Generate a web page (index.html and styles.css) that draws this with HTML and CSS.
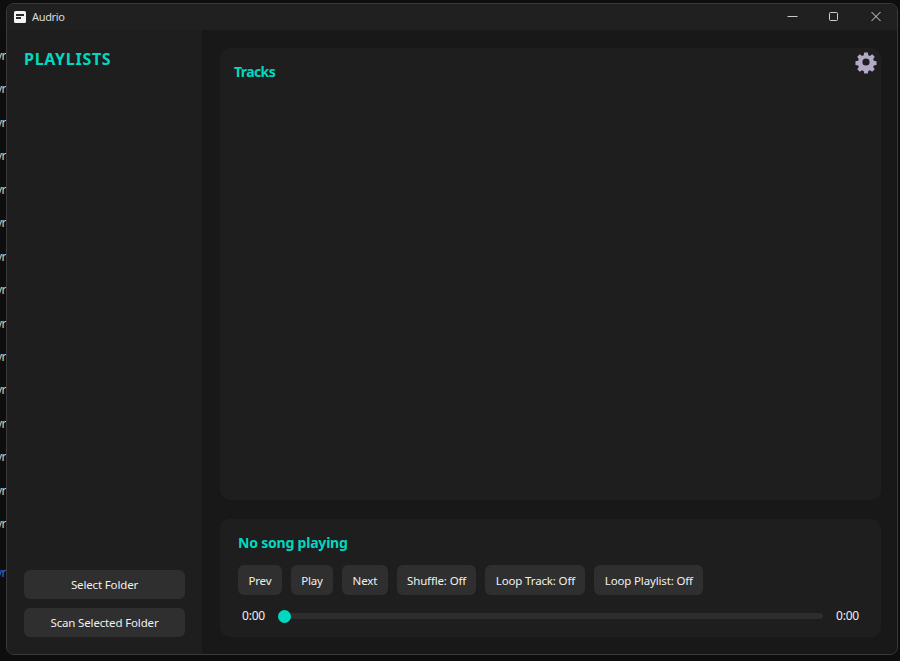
FILE: index.html
```html
<!DOCTYPE html>
<html lang="en">
<head>
<meta charset="utf-8">
<title>Audrio</title>
<link rel="stylesheet" href="styles.css">
</head>
<body>
<div class="desktop">
  <div class="behind">
    <span>yr</span><span>yr</span><span>yr</span><span>yr</span><span>yr</span>
    <span>yr</span><span>yr</span><span>yr</span><span>yr</span><span>yr</span>
    <span>yr</span><span>yr</span><span>yr</span><span>yr</span><span>yr</span>
    <span class="gap-item">yr</span>
  </div>
  <div class="window">
    <header class="titlebar">
      <div class="app">
        <svg class="app-icon" width="12" height="12" viewBox="0 0 12 12">
          <rect width="12" height="12" rx="1.5" fill="#f4f4f4"/>
          <rect x="2" y="3" width="8" height="2" fill="#2a2a2a"/>
          <rect x="2" y="6" width="5" height="2" fill="#2a2a2a"/>
        </svg>
        <span class="app-name">Audrio</span>
      </div>
      <div class="controls">
        <svg class="control" width="41" height="26" viewBox="0 0 41 26"><path d="M15.5 12.5h10" stroke="#c8c8c8" fill="none"/></svg>
        <svg class="control" width="41" height="26" viewBox="0 0 41 26"><rect x="16.5" y="8.5" width="8" height="8" rx="1" stroke="#d0d0d0" fill="none"/></svg>
        <svg class="control" width="43" height="26" viewBox="0 0 43 26"><path d="M17.5 8l9 9M26.5 8l-9 9" stroke="#d8d8d8" fill="none"/></svg>
      </div>
    </header>
    <div class="content">
      <aside class="sidebar">
        <h1 class="playlists-title">PLAYLISTS</h1>
        <div class="side-actions">
          <button class="btn side-btn">Select Folder</button>
          <button class="btn side-btn">Scan Selected Folder</button>
        </div>
      </aside>
      <main class="main">
        <section class="panel tracks">
          <h2 class="tracks-title">Tracks</h2>
          <svg class="gear" width="24" height="24" viewBox="0 0 24 24">
            <path fill="#b3a9c4" fill-rule="evenodd" d="M10 1.5h4l.6 3 1.7.7 2.6-1.7 2.8 2.8-1.7 2.6.7 1.7 3 .6v4l-3 .6-.7 1.7 1.7 2.6-2.8 2.8-2.6-1.7-1.7.7-.6 3h-4l-.6-3-1.7-.7-2.6 1.7-2.8-2.8 1.7-2.6-.7-1.7-3-.6v-4l3-.6.7-1.7-1.7-2.6 2.8-2.8 2.6 1.7 1.7-.7zM12 8a4 4 0 1 0 0 8 4 4 0 0 0 0-8z" transform="translate(1.2 1.2) scale(.9)"/>
          </svg>
        </section>
        <section class="panel player">
          <h2 class="now-playing">No song playing</h2>
          <div class="transport">
            <button class="btn">Prev</button>
            <button class="btn">Play</button>
            <button class="btn">Next</button>
            <button class="btn">Shuffle: Off</button>
            <button class="btn">Loop Track: Off</button>
            <button class="btn">Loop Playlist: Off</button>
          </div>
          <div class="seek">
            <span class="time">0:00</span>
            <div class="track"><span class="thumb"></span></div>
            <span class="time">0:00</span>
          </div>
        </section>
      </main>
    </div>
  </div>
</div>
</body>
</html>
```

FILE: styles.css
```css
* { box-sizing: border-box; }
html, body { margin: 0; height: 100%; }
body {
  background: #0e0e0e;
  font-family: "Noto Sans", "Open Sans", "Liberation Sans", sans-serif;
  overflow: hidden;
}
.desktop {
  display: flex;
  height: 661px;
  padding: 3px 2px 6px 0;
}
.behind {
  width: 6px;
  flex: none;
  display: flex;
  flex-direction: column;
  gap: 13.45px;
  padding-top: 43px;
  overflow: hidden;
  direction: rtl;
  font-size: 12px;
  line-height: 20px;
  letter-spacing: -.5px;
  color: #d8cdb0;
}
.behind span { display: block; white-space: nowrap; }
.behind .gap-item { margin-top: 15px; color: #2f72c4; }
.window {
  flex: 1;
  display: flex;
  flex-direction: column;
  background: #1e1e1e;
  border: 1px solid #3a3a3a;
  border-radius: 8px;
  overflow: hidden;
}
.titlebar {
  height: 26px;
  flex: none;
  display: flex;
  justify-content: space-between;
  align-items: center;
  background: #202020;
}
.app { display: flex; align-items: center; gap: 6px; padding-left: 7px; }
.app-icon { display: block; }
.app-name {
  font-size: 11px;
  line-height: 14px;
  letter-spacing: -.35px;
  color: #dcdcdc;
}
.controls { display: flex; }
.control { display: block; }
.content { flex: 1; display: flex; min-height: 0; }
.sidebar {
  width: 195px;
  flex: none;
  display: flex;
  flex-direction: column;
  justify-content: space-between;
  background: #1e1e1e;
  padding: 18px 17px 17px 17px;
}
.playlists-title {
  margin: 0;
  font-size: 16px;
  line-height: 22px;
  font-weight: 700;
  letter-spacing: .7px;
  color: #00d8c0;
}
.side-actions { display: flex; flex-direction: column; gap: 9px; }
.btn {
  height: 30px;
  padding: 0 10.4px;
  border: 0;
  border-radius: 6px;
  background: #2f2f2f;
  color: #f0f0f0;
  font-family: inherit;
  font-size: 11.5px;
  letter-spacing: -.15px;
  white-space: nowrap;
}
.side-btn { width: 161px; height: 29px; }
.main {
  flex: 1;
  display: flex;
  flex-direction: column;
  gap: 19px;
  background: #181818;
  padding: 18px 16px 17px 18px;
  min-width: 0;
}
.panel { background: #1e1e1e; border-radius: 10px; }
.tracks {
  flex: 1;
  display: flex;
  justify-content: space-between;
  align-items: flex-start;
  padding: 15px 3px 0 14px;
}
.tracks-title {
  margin: 0;
  font-size: 14px;
  line-height: 18px;
  font-weight: 700;
  letter-spacing: -.6px;
  color: #00d8c0;
}
.gear { display: block; margin-top: -13px; }
.player { height: 118px; padding: 14px 22px 0 18px; }
.now-playing {
  margin: 0 0 12px;
  font-size: 14px;
  line-height: 20px;
  font-weight: 700;
  letter-spacing: -.2px;
  color: #00d8c0;
}
.transport { display: flex; gap: 9px; }
.seek {
  display: flex;
  align-items: center;
  gap: 13px;
  margin-top: 11px;
  padding-left: 4px;
}
.time { font-size: 12px; line-height: 20px; letter-spacing: -.2px; color: #f0f0f0; }
.track {
  position: relative;
  flex: 1;
  height: 6px;
  border-radius: 3px;
  background: #2d2d2d;
}
.thumb {
  position: absolute;
  left: -.5px;
  top: -3.5px;
  width: 13px;
  height: 13px;
  border-radius: 50%;
  background: #00d8c0;
}
```
